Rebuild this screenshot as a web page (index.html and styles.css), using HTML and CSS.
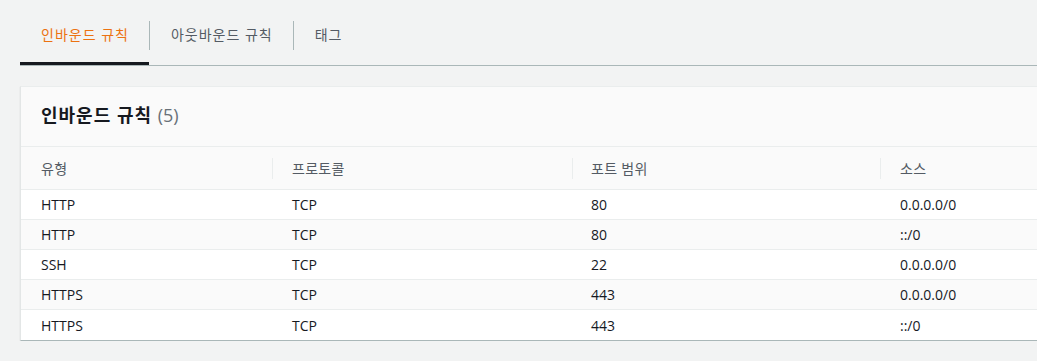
FILE: index.html
```html
<!DOCTYPE html>
<html lang="ko">
<head>
<meta charset="utf-8">
<link rel="stylesheet" href="styles.css">
</head>
<body>
<div class="page">
  <div class="tabs">
    <div class="tab active">인바운드 규칙</div>
    <div class="sep"></div>
    <div class="tab">아웃바운드 규칙</div>
    <div class="sep"></div>
    <div class="tab">태그</div>
  </div>
  <div class="card">
    <div class="card-header">
      <h2 class="title">인바운드 규칙 <span class="count">(5)</span></h2>
    </div>
    <div class="table">
      <div class="row head">
        <div class="cell c1">유형</div>
        <div class="cell c2">프로토콜</div>
        <div class="cell c3">포트 범위</div>
        <div class="cell c4">소스</div>
      </div>
      <div class="row">
        <div class="cell c1">HTTP</div><div class="cell c2">TCP</div><div class="cell c3">80</div><div class="cell c4">0.0.0.0/0</div>
      </div>
      <div class="row alt">
        <div class="cell c1">HTTP</div><div class="cell c2">TCP</div><div class="cell c3">80</div><div class="cell c4">::/0</div>
      </div>
      <div class="row">
        <div class="cell c1">SSH</div><div class="cell c2">TCP</div><div class="cell c3">22</div><div class="cell c4">0.0.0.0/0</div>
      </div>
      <div class="row alt">
        <div class="cell c1">HTTPS</div><div class="cell c2">TCP</div><div class="cell c3">443</div><div class="cell c4">0.0.0.0/0</div>
      </div>
      <div class="row last">
        <div class="cell c1">HTTPS</div><div class="cell c2">TCP</div><div class="cell c3">443</div><div class="cell c4">::/0</div>
      </div>
    </div>
  </div>
</div>
</body>
</html>
```

FILE: styles.css
```css
html, body {
  margin: 0;
  padding: 0;
  background: #f2f3f3;
  overflow: hidden;
}
body {
  font-family: "Open Sans", "Noto Sans CJK KR", sans-serif;
  font-size: 14px;
  color: #16191f;
}
.page {
  width: 1100px;
  margin-left: 20px;
}
.tabs {
  display: flex;
  align-items: center;
  padding-top: 6px;
  border-bottom: 1px solid #aab7b8;
}
.tab {
  height: 59px;
  display: flex;
  align-items: center;
  padding: 0 20px 3px 21px;
  font-size: 14px;
  letter-spacing: 1px;
  color: #545b64;
  box-sizing: border-box;
}
.tab.active {
  color: #ec7211;
  box-shadow: inset 0 -3px 0 #16191f;
}
.sep {
  width: 1px;
  height: 29px;
  background: #aab7b8;
}
.card {
  margin-top: 20px;
  background: #ffffff;
  border-top: 1px solid #eaeded;
  border-left: 1px solid #e3e6e6;
  border-bottom: 1px solid #aab7b8;
  box-shadow: 0 1px 1px 0 rgba(0, 28, 36, 0.15);
}
.card-header {
  height: 60px;
  display: flex;
  align-items: center;
  padding-left: 20px;
  padding-bottom: 5px;
  box-sizing: border-box;
  background: #fafafa;
  border-bottom: 1px solid #eaeded;
}
.title {
  margin: 0;
  font-size: 18px;
  font-weight: 700;
  letter-spacing: 1px;
  color: #16191f;
}
.count {
  font-weight: 400;
  letter-spacing: 0;
  color: #687078;
}
.row {
  display: flex;
  height: 30px;
  align-items: center;
  border-bottom: 1px solid #eaeded;
  box-sizing: border-box;
}
.row.last {
  border-bottom: none;
}
.row.alt {
  background: #fafafa;
}
.row.head {
  height: 43px;
  background: #fafafa;
  color: #545b64;
}
.cell {
  box-sizing: border-box;
  padding-left: 20px;
}
.c1 { width: 251px; padding-left: 20px; }
.c2 { width: 300px; }
.c3 { width: 308px; padding-left: 19px; }
.c4 { flex: 1; }
.head .cell {
  height: 21px;
  display: flex;
  align-items: center;
  letter-spacing: 0.3px;
}
.head .c2, .head .c3, .head .c4 {
  border-left: 1px solid #eaeded;
}
.head .c2 { padding-left: 19px; }
.head .c3 { padding-left: 18px; }
.head .c4 { padding-left: 19px; }
```
